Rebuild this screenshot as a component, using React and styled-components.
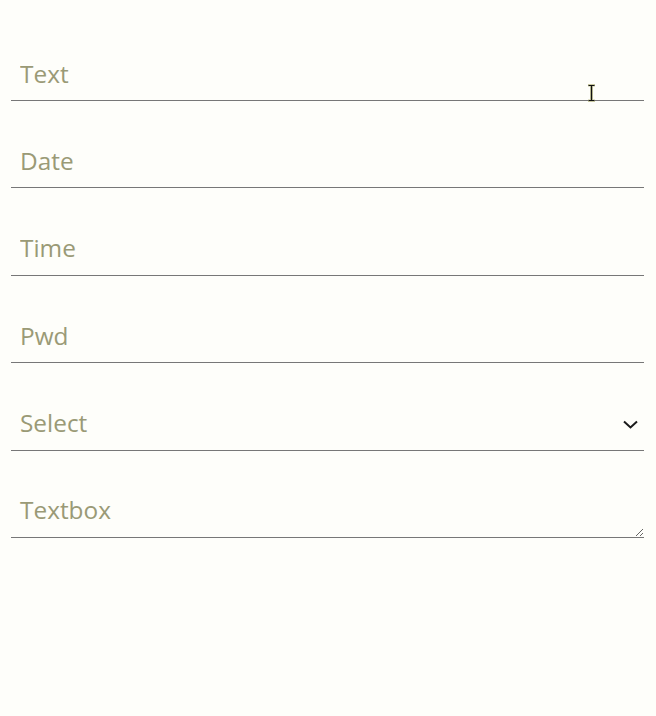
import React from "react";
import styled, { createGlobalStyle } from "styled-components";

const Global = createGlobalStyle`
  html, body {
    margin: 0;
    padding: 0;
    background: #fefefa;
  }
  body {
    font-family: "Open Sans", "Noto Sans", sans-serif;
  }
`;

function Chevron() {
  return (
    <svg width="15" height="9" viewBox="0 0 15 9" fill="none">
      <path d="M1 1.5 L7.5 7.5 L14 1.5" stroke="#1a1a1a" strokeWidth="2" />
    </svg>
  );
}

function Cursor() {
  return (
    <svg width="9" height="18" viewBox="0 0 9 18">
      <path d="M1 1 H8 M4.5 1 V17 M1 17 H8" stroke="#c9c9a0" strokeWidth="3" fill="none" />
      <path d="M1.5 1.5 H7.5 M4.5 1.5 V16.5 M1.5 16.5 H7.5" stroke="#111" strokeWidth="1.2" fill="none" />
    </svg>
  );
}

function App() {
  return (
    <>
      <Global />
      <Page>
        <Form>
          <Field>
            <Input type="text" placeholder="Text" />
          </Field>
          <Field>
            <Input type="text" placeholder="Date" />
          </Field>
          <Field>
            <Input type="text" placeholder="Time" />
          </Field>
          <Field>
            <Input type="password" placeholder="Pwd" />
          </Field>
          <Field>
            <Placeholder>Select</Placeholder>
            <Arrow>
              <Chevron />
            </Arrow>
          </Field>
          <Field>
            <Area placeholder="Textbox" />
          </Field>
        </Form>
        <Pointer>
          <Cursor />
        </Pointer>
      </Page>
    </>
  );
}

export default App;

const Page = styled.div`
  position: relative;
  width: 656px;
  height: 716px;
  padding: 46px 12px 0 11px;
  box-sizing: border-box;
`;

const Form = styled.div`
  display: flex;
  flex-direction: column;
  gap: 32.4px;
`;

const Field = styled.div`
  height: 54px;
  border-bottom: 1px solid #777;
  display: flex;
  align-items: center;
  justify-content: space-between;
  position: relative;
`;

const Input = styled.input`
  flex: 1;
  border: none;
  outline: none;
  background: transparent;
  padding: 0 0 0 9px;
  font-family: "Open Sans", "Noto Sans", sans-serif;
  font-size: 24.4px;
  color: #333;
  &::placeholder {
    color: #9a9a76;
  }
`;

const Placeholder = styled.div`
  padding-left: 9px;
  font-size: 24.4px;
  color: #9a9a76;
`;

const Arrow = styled.div`
  display: flex;
  align-items: center;
  margin-right: 6px;
  margin-top: 4px;
`;

const Area = styled.textarea`
  flex: 1;
  height: 54px;
  box-sizing: border-box;
  border: none;
  outline: none;
  background: transparent;
  padding: 12px 0 0 9px;
  font-family: "Open Sans", "Noto Sans", sans-serif;
  font-size: 24.4px;
  line-height: 30px;
  color: #333;
  resize: vertical;
  &::placeholder {
    color: #9a9a76;
  }
`;

const Pointer = styled.div`
  position: absolute;
  left: 587px;
  top: 84px;
  pointer-events: none;
`;
